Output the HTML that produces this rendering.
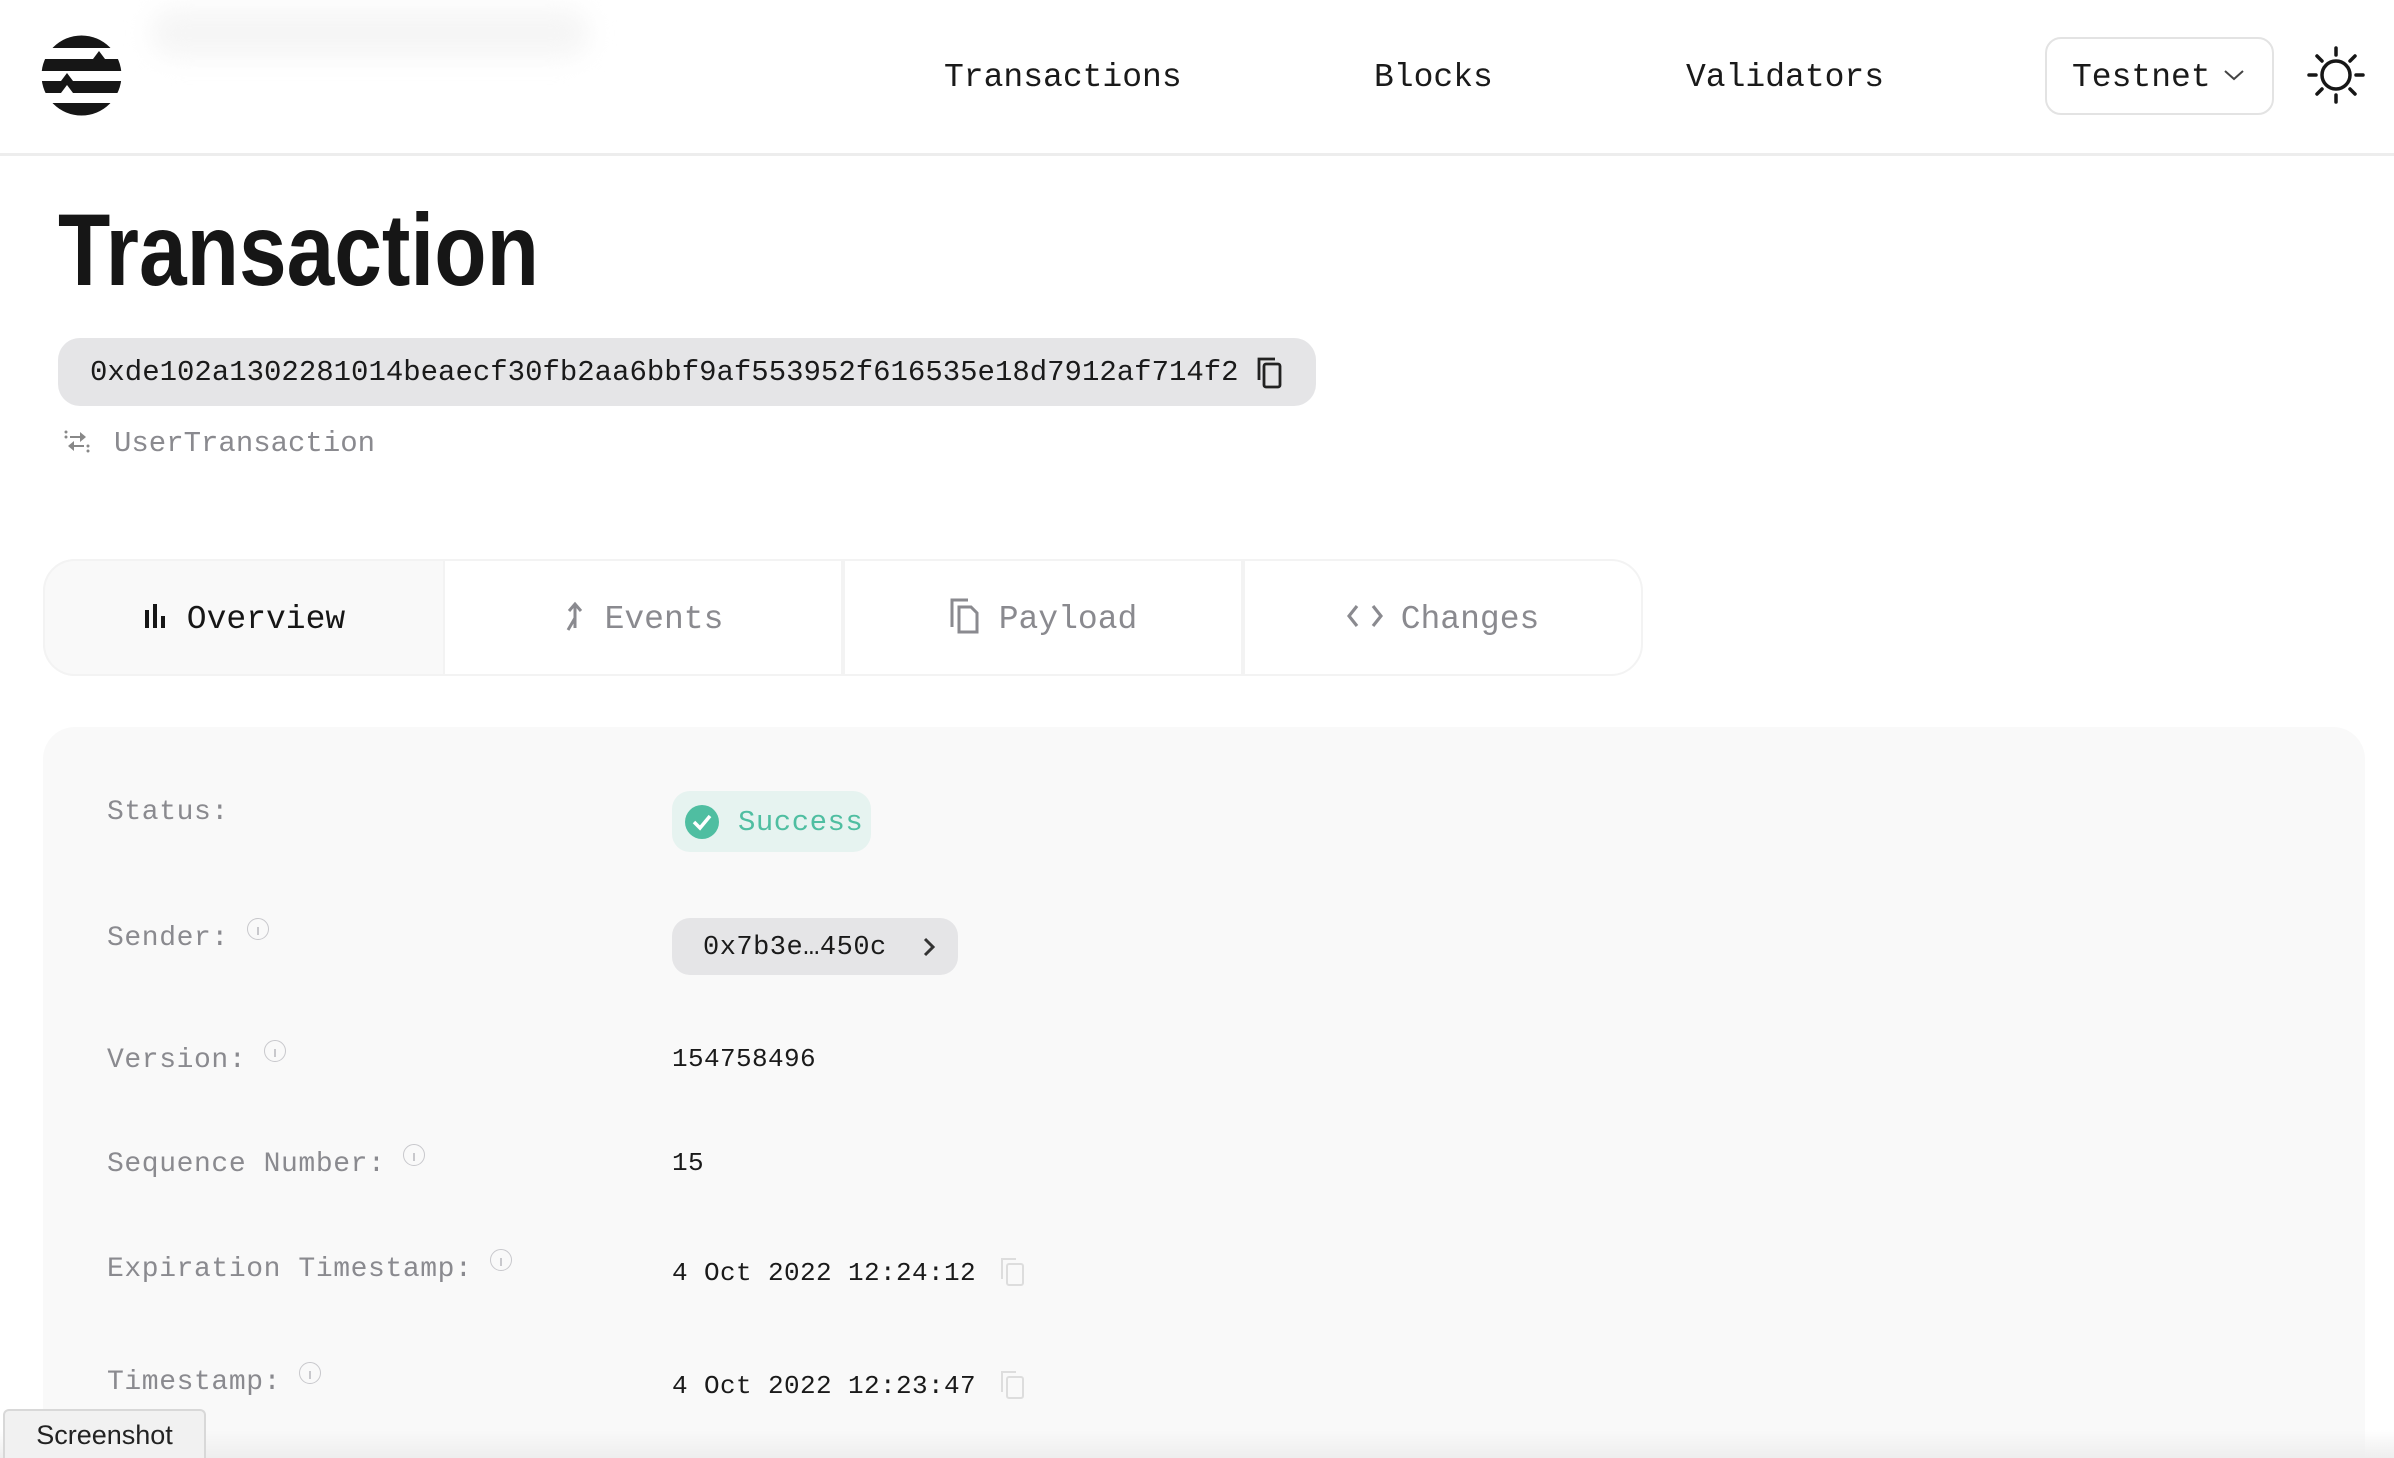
<!DOCTYPE html>
<html><head><meta charset="utf-8"><style>
*{box-sizing:border-box;margin:0;padding:0}
html{width:2394px;height:1458px;overflow:hidden}
body{width:2394px;height:1458px;overflow:hidden;background:#fff;font-family:"Liberation Mono",monospace;color:#1a1a1a;position:relative}
.abs{position:absolute}
.hdr{position:absolute;left:0;top:0;width:2394px;height:156px;border-bottom:3px solid #ededed}
.nav{position:absolute;top:58px;font-size:33px;line-height:40px;color:#1a1a1a}
.lbl{position:absolute;left:107px;font-size:28px;color:#8a8a8f;line-height:34px;letter-spacing:0.6px}
.val{position:absolute;left:672px;font-size:26px;line-height:32px;color:#1a1a1a;letter-spacing:0.4px}
.info{display:inline-block;width:22px;height:22px;border:1.5px solid #c8c8cc;border-radius:50%;vertical-align:top;margin-left:18px;margin-top:-4px;position:relative}
.info:after{content:"";position:absolute;left:9px;top:8px;width:2px;height:8px;background:#c8c8cc}
.tab{position:absolute;top:559px;height:117px;width:400px;font-size:33px;line-height:117px;text-align:center;color:#8a8a8f;border:2px solid #f3f3f3;background:#fff}
</style></head><body>
<div class="hdr"></div>
<div class="abs" style="left:150px;top:8px;width:440px;height:50px;background:#f6f6f6;filter:blur(12px);border-radius:25px"></div>
<svg class="abs" style="left:41px;top:35px" width="81" height="81" viewBox="0 0 81 81">
<defs><clipPath id="c"><circle cx="40.5" cy="40.5" r="40"/></clipPath></defs>
<g clip-path="url(#c)" fill="#161616">
<rect x="0" y="0" width="81" height="13"/>
<path d="M0 24 H52 L58 16 L64 24 H81 V36 H0Z"/>
<path d="M0 46 H20 L26 38 L32 46 H81 V58 H32 L26 50 L20 58 H0Z"/>
<path d="M0 68 H81 V81 H0Z"/>
</g></svg>
<div class="nav" style="left:944px">Transactions</div>
<div class="nav" style="left:1374px">Blocks</div>
<div class="nav" style="left:1686px">Validators</div>
<div class="abs" style="left:2045px;top:37px;width:229px;height:78px;border:2px solid #e3e3e3;border-radius:16px"></div>
<div class="nav" style="left:2072px;font-size:33px">Testnet</div>
<svg class="abs" style="left:2223px;top:68px" width="22" height="14"><path d="M2 3 L11 11 L20 3" fill="none" stroke="#444" stroke-width="2"/></svg>
<svg class="abs" style="left:2306px;top:45px" width="60" height="60" viewBox="0 0 60 60" stroke="#161616" stroke-width="3.5" fill="none" stroke-linecap="round">
<circle cx="30" cy="30" r="14"/><path d="M30 3v7M30 50v7M3 30h7M50 30h7M11 11l5 5M44 44l5 5M11 49l5-5M44 16l5-5"/></svg>

<div class="abs" style="left:58px;top:190px;font-family:'Liberation Sans',sans-serif;font-weight:bold;font-size:102px;line-height:120px;color:#161616;transform:scaleX(0.84);transform-origin:0 0">Transaction</div>

<div class="abs" style="left:58px;top:338px;width:1258px;height:68px;background:#e5e5e7;border-radius:22px"></div>
<div class="abs" style="left:90px;top:356px;font-size:29px;line-height:34px;color:#1a1a1a">0xde102a1302281014beaecf30fb2aa6bbf9af553952f616535e18d7912af714f2</div>
<svg class="abs" style="left:1255px;top:356px" width="30" height="34" viewBox="0 0 30 34" fill="none" stroke="#222" stroke-width="2.8"><path d="M4 24V3h16"/><rect x="9" y="8" width="16" height="23" rx="2"/></svg>

<svg class="abs" style="left:62px;top:430px" width="30" height="24" viewBox="0 0 30 24" fill="#888"><path d="M18 6H8v2h10v4l6-5-6-5z"/><circle cx="4" cy="7" r="1.5"/><circle cx="4" cy="2" r="1.5"/><path d="M12 17h10v-2H12v-4l-6 5 6 5z"/><circle cx="26" cy="16" r="1.5"/><circle cx="26" cy="21" r="1.5"/></svg>
<div class="abs" style="left:114px;top:427px;font-size:29px;line-height:34px;color:#8a8a8f">UserTransaction</div>

<div class="abs" style="left:43px;top:559px;width:1598px;height:117px;border:2px solid #f3f3f3;border-radius:32px;background:#fff"></div>
<div class="tab" style="left:43px;background:#f9f9f9;color:#161616;border-radius:32px 0 0 32px;border-right:none">
<svg style="vertical-align:middle;margin-right:18px;margin-top:-6px" width="26" height="24" viewBox="0 0 26 24" fill="#161616"><rect x="2" y="6" width="4" height="18"/><rect x="10" y="0" width="4" height="24"/><rect x="18" y="12" width="4" height="12"/></svg>Overview</div>
<div class="tab" style="left:443px">
<svg style="vertical-align:middle;margin-right:18px;margin-top:-6px" width="24" height="32" viewBox="0 0 24 32" fill="none" stroke="#8a8a8f" stroke-width="3"><path d="M12 28V5M6 11l6-7 6 7M12 18L5 30"/></svg>Events</div>
<div class="tab" style="left:843px">
<svg style="vertical-align:middle;margin-right:18px;margin-top:-6px" width="32" height="38" viewBox="0 0 32 38" fill="none" stroke="#8a8a8f" stroke-width="3"><path d="M3 30V3h16"/><path d="M10 10h12l6 6v19H10z"/></svg>Payload</div>
<div class="tab" style="left:1243px;border-radius:0 32px 32px 0">
<svg style="vertical-align:middle;margin-right:18px;margin-top:-6px" width="36" height="26" viewBox="0 0 36 26" fill="none" stroke="#8a8a8f" stroke-width="3.2"><path d="M10 3L2 13l8 10M26 3l8 10-8 10"/></svg>Changes</div>

<div class="abs" style="left:43px;top:727px;width:2322px;height:731px;background:#f9f9f9;border-radius:32px 32px 0 0"></div>

<div class="lbl" style="top:796px">Status:</div>
<div class="abs" style="left:672px;top:791px;width:199px;height:61px;background:#e6f3f0;border-radius:18px"></div>
<svg class="abs" style="left:685px;top:805px" width="34" height="34" viewBox="0 0 34 34"><circle cx="17" cy="17" r="17" fill="#4fbea1"/><path d="M9 17l6 6 10-12" fill="none" stroke="#fff" stroke-width="3.5"/></svg>
<div class="abs" style="left:738px;top:806px;font-size:29px;line-height:34px;color:#4fbea1;letter-spacing:0.5px">Success</div>

<div class="lbl" style="top:922px">Sender:<span class="info"></span></div>
<div class="abs" style="left:672px;top:918px;width:286px;height:57px;background:#e5e5e7;border-radius:18px"></div>
<div class="abs" style="left:703px;top:931px;font-size:27px;line-height:34px;letter-spacing:0.5px">0x7b3e…450c</div>
<svg class="abs" style="left:922px;top:936px" width="14" height="22"><path d="M3 3l8 8-8 8" fill="none" stroke="#333" stroke-width="3"/></svg>

<div class="lbl" style="top:1044px">Version:<span class="info"></span></div>
<div class="val" style="top:1043px">154758496</div>
<div class="lbl" style="top:1148px">Sequence Number:<span class="info"></span></div>
<div class="val" style="top:1147px">15</div>
<div class="lbl" style="top:1253px">Expiration Timestamp:<span class="info"></span></div>
<div class="val" style="top:1257px">4 Oct 2022 12:24:12</div>
<svg class="abs" style="left:1000px;top:1257px" width="26" height="30" viewBox="0 0 26 30" fill="none" stroke="#ddd" stroke-width="2"><path d="M2 22V2h14"/><rect x="7" y="7" width="16" height="21" rx="2"/></svg>
<div class="lbl" style="top:1366px">Timestamp:<span class="info"></span></div>
<div class="val" style="top:1370px">4 Oct 2022 12:23:47</div>
<svg class="abs" style="left:1000px;top:1370px" width="26" height="30" viewBox="0 0 26 30" fill="none" stroke="#ddd" stroke-width="2"><path d="M2 22V2h14"/><rect x="7" y="7" width="16" height="21" rx="2"/></svg>

<div class="abs" style="left:0;top:1430px;width:2394px;height:28px;background:linear-gradient(#f9f9f900,#eee)"></div>
<div class="abs" style="left:3px;top:1409px;width:203px;height:49px;background:#f1f1f1;border:2px solid #d8d8d8;border-bottom:none;border-radius:6px 6px 0 0;font-family:'Liberation Sans',sans-serif;font-size:27px;line-height:48px;text-align:center;color:#222">Screenshot</div>
</body></html>
